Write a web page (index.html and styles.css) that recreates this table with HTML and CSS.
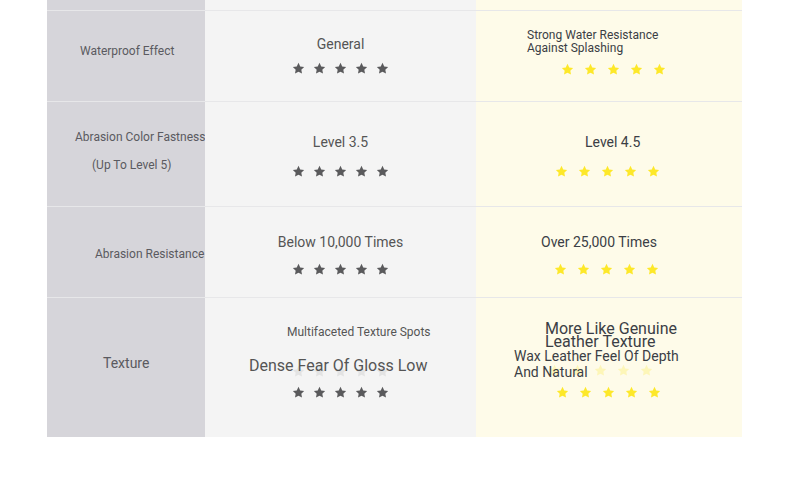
FILE: index.html
```html
<!DOCTYPE html>
<html>
<head>
<meta charset="utf-8">
<link rel="stylesheet" href="styles.css">
</head>
<body>
<svg width="0" height="0" class="defs">
  <defs>
    <symbol id="star" viewBox="0 0 24 24"><path d="M12 1.5l3.2 6.6 7.2 1-5.2 5.1 1.25 7.2L12 18l-6.45 3.4L6.8 14.2 1.6 9.1l7.2-1z"/></symbol>
  </defs>
</svg>
<div class="table">
  <div class="cell c-left r0"></div>
  <div class="cell c-mid r0"></div>
  <div class="cell c-right r0"></div>

  <!-- Row 1 -->
  <div class="cell c-left r1">
    <div class="lbl w1">Waterproof Effect</div>
  </div>
  <div class="cell c-mid r1 center p25">
    <div class="val">General</div>
    <div class="stars gray m11"><svg><use href="#star"/></svg><svg><use href="#star"/></svg><svg><use href="#star"/></svg><svg><use href="#star"/></svg><svg><use href="#star"/></svg></div>
  </div>
  <div class="cell c-right r1">
    <div class="small-dark w-strong">Strong Water Resistance<br>Against Splashing</div>
    <div class="stars yellow ys1"><svg><use href="#star"/></svg><svg><use href="#star"/></svg><svg><use href="#star"/></svg><svg><use href="#star"/></svg><svg><use href="#star"/></svg></div>
  </div>

  <!-- Row 2 -->
  <div class="cell c-left r2">
    <div class="lbl a1">Abrasion Color Fastness</div>
    <div class="lbl a2">(Up To Level 5)</div>
  </div>
  <div class="cell c-mid r2 center p32">
    <div class="val">Level 3.5</div>
    <div class="stars gray m16"><svg><use href="#star"/></svg><svg><use href="#star"/></svg><svg><use href="#star"/></svg><svg><use href="#star"/></svg><svg><use href="#star"/></svg></div>
  </div>
  <div class="cell c-right r2">
    <div class="val dark l45">Level 4.5</div>
    <div class="stars yellow ys2"><svg><use href="#star"/></svg><svg><use href="#star"/></svg><svg><use href="#star"/></svg><svg><use href="#star"/></svg><svg><use href="#star"/></svg></div>
  </div>

  <!-- Row 3 -->
  <div class="cell c-left r3">
    <div class="lbl ar">Abrasion Resistance</div>
  </div>
  <div class="cell c-mid r3 center p27">
    <div class="val">Below 10,000 Times</div>
    <div class="stars gray m14"><svg><use href="#star"/></svg><svg><use href="#star"/></svg><svg><use href="#star"/></svg><svg><use href="#star"/></svg><svg><use href="#star"/></svg></div>
  </div>
  <div class="cell c-right r3">
    <div class="val dark o25">Over 25,000 Times</div>
    <div class="stars yellow ys3"><svg><use href="#star"/></svg><svg><use href="#star"/></svg><svg><use href="#star"/></svg><svg><use href="#star"/></svg><svg><use href="#star"/></svg></div>
  </div>

  <!-- Row 4 -->
  <div class="cell c-left r4">
    <div class="lbl-big tx">Texture</div>
  </div>
  <div class="cell c-mid r4 ghost-wrap">
    <div class="lbl-mid mts">Multifaceted Texture Spots</div>
    <div class="stars gray ghost ghost-gray"><svg><use href="#star"/></svg><svg><use href="#star"/></svg><svg><use href="#star"/></svg><svg><use href="#star"/></svg><svg><use href="#star"/></svg></div>
    <div class="big dfg">Dense Fear Of Gloss Low</div>
    <div class="stars gray m12 gs4"><svg><use href="#star"/></svg><svg><use href="#star"/></svg><svg><use href="#star"/></svg><svg><use href="#star"/></svg><svg><use href="#star"/></svg></div>
  </div>
  <div class="cell c-right r4 ghost-wrap">
    <div class="stars yellow ghost ghost-yellow"><svg><use href="#star"/></svg><svg><use href="#star"/></svg><svg><use href="#star"/></svg><svg><use href="#star"/></svg><svg><use href="#star"/></svg></div>
    <div class="big-dark mlg">More Like Genuine<br>Leather Texture</div>
    <div class="med-dark wax">Wax Leather Feel Of Depth<br>And Natural</div>
    <div class="stars yellow ys4"><svg><use href="#star"/></svg><svg><use href="#star"/></svg><svg><use href="#star"/></svg><svg><use href="#star"/></svg><svg><use href="#star"/></svg></div>
  </div>
</div>
</body>
</html>
```
FILE: styles.css
```css
html, body {
  margin: 0;
  padding: 0;
  background: #ffffff;
  font-family: Roboto, "Liberation Sans", Arial, sans-serif;
}
.defs { position: absolute; width: 0; height: 0; overflow: hidden; }

.table {
  margin-left: 47px;
  width: 695px;
  display: grid;
  grid-template-columns: 158px 271px 266px;
  grid-template-rows: 10px 91px 105px 91px 140px;
}
.cell {
  box-sizing: border-box;
  display: flex;
  flex-direction: column;
  align-items: flex-start;
  min-width: 0;
  overflow: visible;
  white-space: nowrap;
}
.r1, .r2, .r3, .r4 { border-top: 1px solid #e7e7e9; }
.c-left { background: #d6d5da; }
.c-mid { background: #f4f4f4; }
.c-right { background: #fefbe9; }
.center { align-items: center; }

.lbl { font-size: 12px; line-height: 14px; color: #5a5a60; }
.lbl-big { font-size: 14px; line-height: 16px; color: #5a5a60; }
.lbl-mid { font-size: 12px; line-height: 14px; color: #555; }
.val { font-size: 14px; line-height: 16px; color: #555; }
.val.dark { color: #3b3e45; }
.big { font-size: 16px; line-height: 18px; color: #555; position: relative; }
.small-dark { font-size: 12px; line-height: 13px; color: #3b3e45; }
.big-dark { font-size: 16px; line-height: 13px; color: #3b3e45; }
.med-dark { font-size: 14px; line-height: 16px; color: #3b3e45; position: relative; }

/* left labels */
.w1 { margin: 33px 0 0 33px; }
.a1 { margin: 28px 0 0 28px; }
.a2 { margin: 14px 0 0 45px; }
.ar { margin: 40px 0 0 48px; }
.tx { margin: 57px 0 0 56px; }

/* middle column */
.p25 { padding-top: 25px; }
.p32 { padding-top: 32px; }
.p27 { padding-top: 27px; }
.mts { margin: 27px 0 0 82px; }
.dfg { margin: 18px 0 0 44px; }

/* stars */
.stars { display: flex; }
.stars svg { width: 13px; height: 13px; display: block; }
.stars.gray { gap: 8px; fill: #5a5a5c; }
.stars.yellow { gap: 10px; fill: #fde82a; }
.m11 { margin-top: 10px; }
.m16 { margin-top: 15px; }
.m14 { margin-top: 13px; }
.m12 { margin-top: 11px; }
.gs4 { margin-left: 87px; }

/* right column */
.w-strong { margin: 18px 0 0 51px; }
.ys1 { margin: 8px 0 0 85px; }
.l45 { margin: 32px 0 0 109px; }
.ys2 { margin: 15px 0 0 79px; }
.o25 { margin: 27px 0 0 65px; }
.ys3 { margin: 13px 0 0 78px; }
.mlg { margin: 24px 0 0 69px; }
.wax { margin: 0 0 0 38px; }
.ys4 { margin: 6px 0 0 80px; }

/* faint ghost stars lying behind text */
.ghost-wrap { position: relative; }
.ghost { position: absolute; opacity: 0.1; }
.ghost-gray { left: 87px; top: 67px; }
.ghost-yellow { left: 72px; top: 66px; opacity: 0.25; }
```
